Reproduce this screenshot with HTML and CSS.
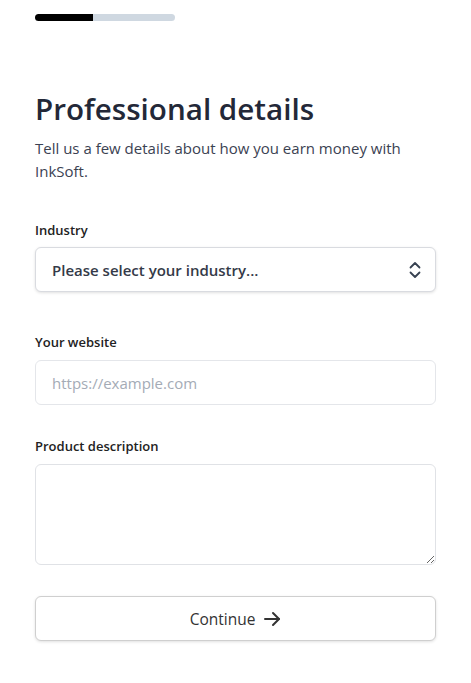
FILE: index.html
```html
<!DOCTYPE html>
<html>
<head>
  <title>Professional details</title>
  <link rel="stylesheet" href="styles.css">
</head>
<body>
  <div class="page">
    <div class="progress">
      <span class="progress-done"></span>
      <span class="progress-rest"></span>
    </div>

    <h1>Professional details</h1>
    <p class="intro">Tell us a few details about how you earn money with InkSoft.</p>

    <form>
      <label class="field field-select">
        <span class="field-label">Industry</span>
        <span class="select-wrap">
          <select id="industry">
            <option value="" selected>Please select your industry...</option>
            <option value="apparel">Apparel decoration</option>
            <option value="promo">Promotional products</option>
          </select>
          <svg class="select-icon" width="14" height="18" viewBox="0 0 14 18" fill="none" stroke="#374151" stroke-width="1.8" stroke-linecap="round" stroke-linejoin="round">
            <path d="M2.5 6.5 7 2l4.5 4.5"/>
            <path d="M2.5 11.5 7 16l4.5-4.5"/>
          </svg>
        </span>
      </label>

      <label class="field">
        <span class="field-label">Your website</span>
        <input type="text" id="website" placeholder="https://example.com">
      </label>

      <label class="field">
        <span class="field-label">Product description</span>
        <textarea id="description"></textarea>
      </label>

      <button type="button" class="continue">
        Continue
        <svg width="18" height="16" viewBox="0 0 18 16" fill="none" stroke="#333" stroke-width="2" stroke-linecap="round" stroke-linejoin="round">
          <path d="M2 8h14"/>
          <path d="M10 2l6 6-6 6"/>
        </svg>
      </button>
    </form>
  </div>
</body>
</html>
```

FILE: styles.css
```css
body {
  margin: 0;
  background-color: #fff;
  font-family: "Open Sans", "Noto Sans", sans-serif;
  color: #1f2937;
}

.page {
  padding: 14px 35px 40px;
}

.progress {
  display: flex;
  width: 140px;
  height: 7px;
  border-radius: 4px;
  overflow: hidden;
}

.progress-done {
  width: 58px;
  background-color: #000;
}

.progress-rest {
  flex: 1;
  background-color: #cfd8e1;
}

h1 {
  margin: 66px 0 0;
  font-size: 29.6px;
  font-weight: 600;
  line-height: 44px;
  color: #232838;
}

.intro {
  margin: 6px 0 0;
  font-size: 15px;
  line-height: 23px;
  color: #3b4252;
}

form {
  margin-top: 37px;
}

.field {
  display: block;
  margin-bottom: 31px;
}

.field-select {
  margin-bottom: 40px;
}

.field-label {
  display: block;
  margin-bottom: 8px;
  font-size: 13px;
  font-weight: 600;
  line-height: 20px;
  color: #222;
}

.field-select .field-label {
  margin-bottom: 7px;
}

.select-wrap {
  position: relative;
  display: block;
}

select,
input[type="text"],
textarea {
  display: block;
  width: 100%;
  box-sizing: border-box;
  font-family: inherit;
  border-radius: 6px;
  background-color: #fff;
}

select {
  appearance: none;
  height: 45px;
  padding: 0 40px 0 16px;
  border: 1px solid #d9dbe0;
  box-shadow: 0 1px 3px rgba(0, 0, 0, 0.12);
  font-size: 15px;
  font-weight: 600;
  color: #343a48;
}

.select-icon {
  position: absolute;
  right: 14px;
  top: 14px;
  pointer-events: none;
}

input[type="text"] {
  height: 45px;
  padding: 0 16px;
  border: 1px solid #e4e6ea;
  font-size: 15px;
  color: #333;
}

input::placeholder {
  color: #a4abb6;
}

textarea {
  height: 101px;
  border: 1px solid #e0e2e6;
  padding: 10px 16px;
  font-size: 15px;
}

.continue {
  display: flex;
  align-items: center;
  justify-content: center;
  gap: 8px;
  width: 100%;
  height: 45px;
  margin-top: 1px;
  background-color: #fff;
  border: 1px solid #cfcfcf;
  border-radius: 6px;
  box-shadow: 0 1px 3px rgba(0, 0, 0, 0.12);
  font-family: inherit;
  font-size: 15.5px;
  font-weight: 500;
  color: #333;
  cursor: pointer;
}
```
